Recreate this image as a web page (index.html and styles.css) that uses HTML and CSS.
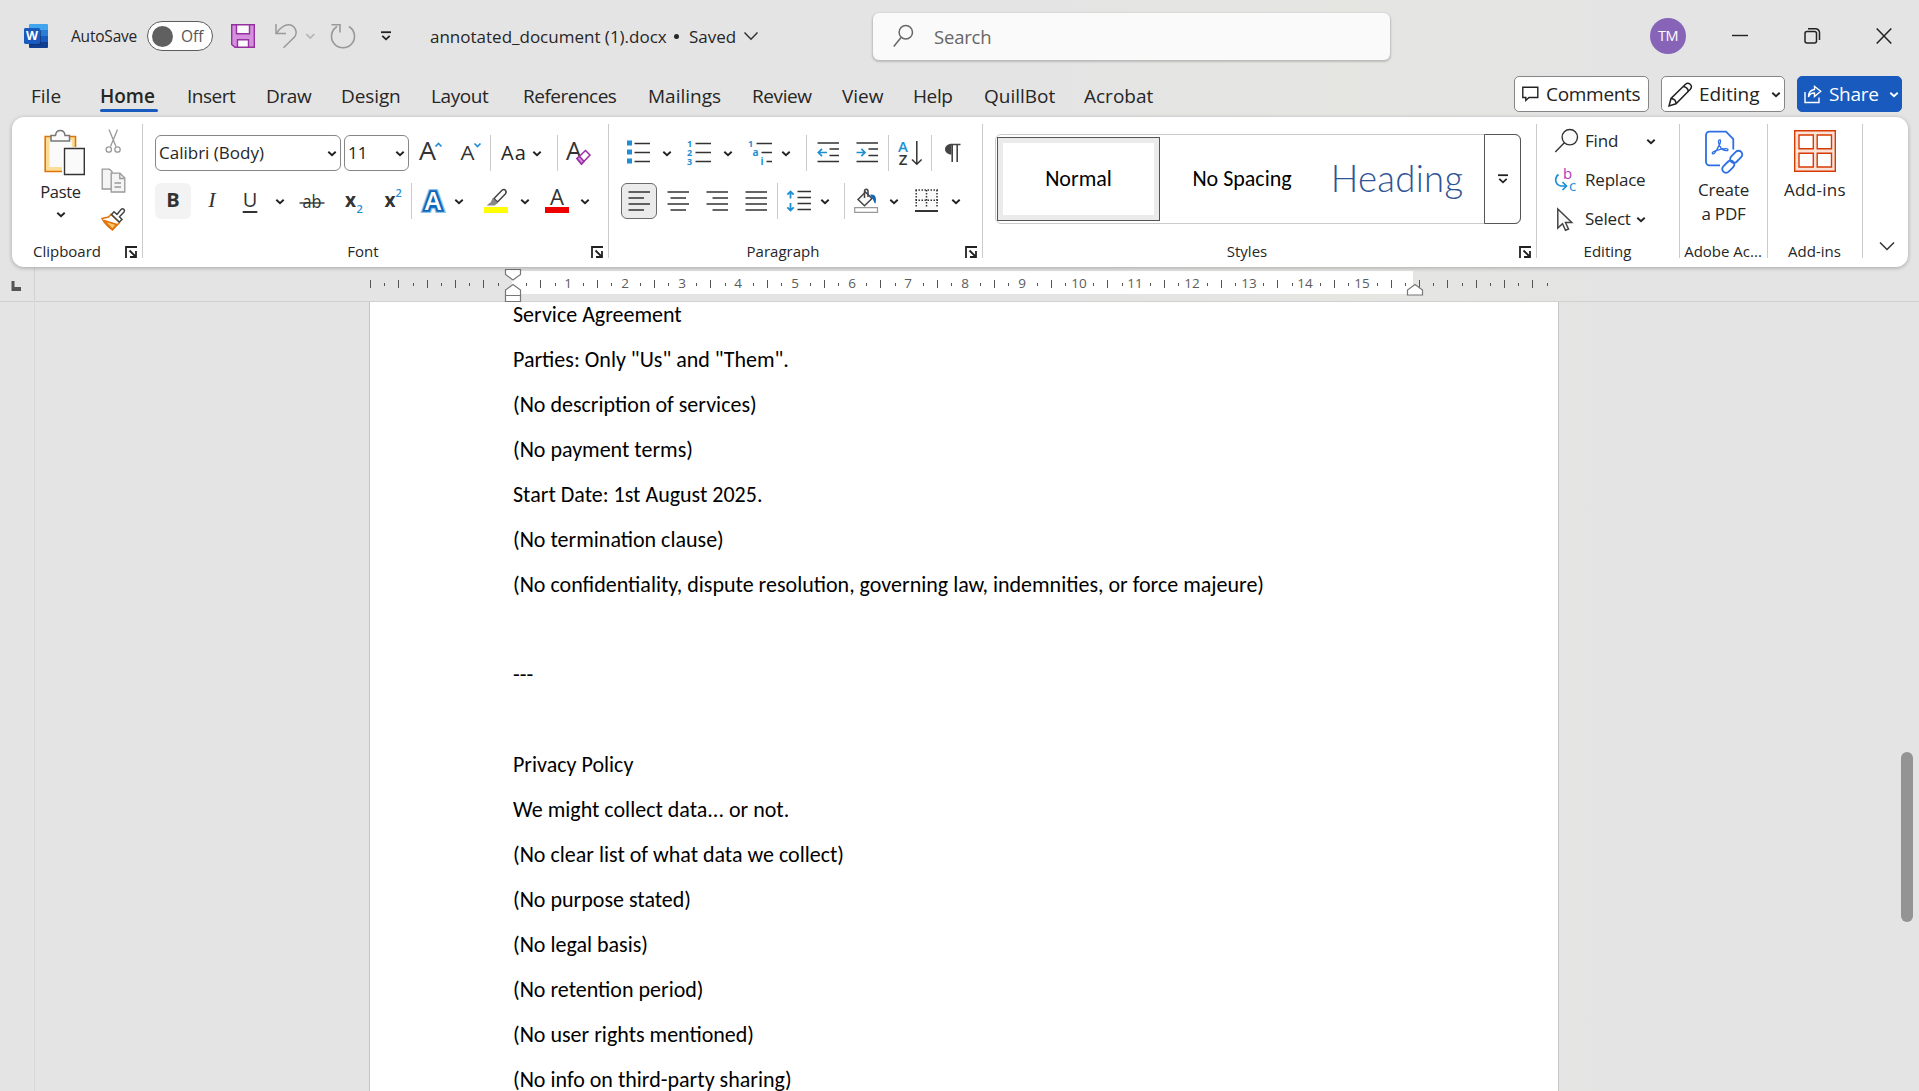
FILE: index.html
```html
<!DOCTYPE html>
<html lang="en">
<head>
<meta charset="utf-8">
<title>annotated_document (1).docx - Word</title>
<link rel="stylesheet" href="styles.css">
</head>
<body>
<svg class="defs" width="0" height="0">
  <symbol id="chev" viewBox="0 0 10 36"><path d="M1.3 16.8 5 20.3 8.7 16.8" fill="none" stroke="#222" stroke-width="1.9"/></symbol>
  <symbol id="launch" viewBox="0 0 12 12"><path d="M1 12V1H12" fill="none" stroke="#222" stroke-width="1.8"/><path d="M4.5 4.5 10.5 10.5M11 5V11H5" fill="none" stroke="#222" stroke-width="1.8"/></symbol>
  <symbol id="drop" viewBox="0 0 12 10"><path d="M1 1.2H11" stroke="#222" stroke-width="1.8"/><path d="M2.3 4.8 6 8.3 9.7 4.8" fill="none" stroke="#222" stroke-width="1.8"/></symbol>
</svg>

<header class="titlebar">
  <svg class="word-logo" width="24" height="24" viewBox="0 0 24 24">
    <path d="M6 0H23a1 1 0 0 1 1 1V6H5V1a1 1 0 0 1 1-1z" fill="#41a5ee"/><path d="M5 6H24V12H5z" fill="#2b7cd3"/><path d="M5 12H24V18H5z" fill="#185abd"/><path d="M5 18H24V23a1 1 0 0 1-1 1H6a1 1 0 0 1-1-1z" fill="#103f91"/>
    <path d="M5 6H16a1 1 0 0 1 1 1V20a1 1 0 0 1-1 1H5z" fill="#0b2c66" opacity=".55"/>
    <rect y="4" width="16" height="16" rx="1.4" fill="#185abd"/>
    <text x="8" y="16.4" text-anchor="middle" font-size="12" font-weight="700" fill="#fff" textLength="12" lengthAdjust="spacingAndGlyphs">W</text>
  </svg>
  <span class="autosave">AutoSave</span>
  <span class="toggle"><i class="knob"></i><span>Off</span></span>
  <svg width="24" height="24" viewBox="0 0 24 24"><path d="M.7.7H23.3V23.3H4L.7 20.5z" fill="#d490dc" stroke="#9430a0" stroke-width="1.4"/><path d="M5.5.7H18.5V9.8H5.5z" fill="#fafafa" stroke="#9430a0" stroke-width="1.4"/><path d="M6.5 15.7H17.5V23.3H6.5z" fill="#fafafa" stroke="#9430a0" stroke-width="1.4"/></svg>
  <svg width="24" height="26" viewBox="274 23 24 26" fill="none" stroke="#999" stroke-width="1.5"><path d="M276 24V33.5H286"/><path d="M276.3 33.2C281 27 284 24.8 288.5 24.8A7.6 7.6 0 0 1 294.5 37L283.5 47.7"/></svg>
  <svg width="10" height="10" viewBox="305 30 10 10" fill="none" stroke="#b4b4b4" stroke-width="1.6"><path d="M306.300 33 310.300 37 314.300 33"/></svg>
  <svg width="26" height="26" viewBox="329.500 23 26 26" fill="none" stroke="#999" stroke-width="1.6"><path d="M331 24.800H339.500V32.500"/><path d="M336.500 26.500A11.500 11.500 0 1 0 348.500 26.500"/></svg>
  <svg width="12" height="10"><use href="#drop"/></svg>
  <span class="doc-name">annotated_document (1).docx</span>
  <span class="dot"></span>
  <span class="saved">Saved</span>
  <svg width="16" height="10" viewBox="0 0 16 10" fill="none" stroke="#333" stroke-width="1.5"><path d="M1.500 1.500 8 8.200 14.500 1.500"/></svg>
  <div class="search">
    <svg width="20" height="24" viewBox="0 0 20 24" fill="none" stroke="#666" stroke-width="1.500"><circle cx="12.800" cy="8.200" r="6.700"/><path d="M8 13.500 .8 22.500"/></svg>
    <span>Search</span>
  </div>
  <span class="avatar">TM</span>
  <svg width="16" height="18" viewBox="0 0 16 18"><path d="M0 8.500H16" stroke="#222" stroke-width="1.400"/></svg>
  <svg width="17" height="18" viewBox="0 0 17 18" fill="none" stroke="#222" stroke-width="1.500"><rect x="1" y="4.500" width="11.500" height="11.500" rx="2"/><path d="M4 1.700H11.500A4 4 0 0 1 15.500 5.700V13"/></svg>
  <svg width="16" height="18" viewBox="0 0 16 18" stroke="#222" stroke-width="1.500"><path d="M.7 1.500 15.300 16.500M15.300 1.500 .7 16.500"/></svg>
</header>

<nav class="tabs">
  <a>File</a><a class="active">Home</a><a>Insert</a><a>Draw</a><a>Design</a><a>Layout</a><a>References</a><a>Mailings</a><a>Review</a><a>View</a><a>Help</a><a>QuillBot</a><a>Acrobat</a>
  <div class="actions">
    <button class="btn comments"><svg width="17" height="16" viewBox="0 0 17 16" fill="none" stroke="#222" stroke-width="1.400"><path d="M.8 1.200H15.800V11.500H7L3.800 14.500V11.500H.8z"/></svg><span>Comments</span></button>
    <button class="btn editing"><svg width="25" height="25" viewBox="0 0 25 25" fill="none" stroke="#222" stroke-width="1.500"><path d="M1 24 3 16.500 17.500 2.200C20.500-.5 25.500 3.500 22.300 7.300L8 21.800z"/><path d="M3 16.500C6 16.800 8 19 8 21.800M15.200 4.500C18.300 5 20.200 7 20.200 9.500"/></svg><span>Editing</span><svg width="10" height="36"><use href="#chev"/></svg></button>
    <button class="btn share"><svg width="18" height="19" viewBox="0 0 18 19" fill="none" stroke="#fff" stroke-width="1.400"><path d="M1 7V17.500H15V12.500"/><path d="M4.500 12C5.500 8.500 7.500 8 10.500 8V11.500L16.700 6.200 10.500 1.500V4.500C6.500 5 4.500 7.500 4.500 12z"/></svg><span>Share</span><svg width="10" height="36" viewBox="0 0 10 36"><path d="M1.300 16.800 5 20.300 8.700 16.800" fill="none" stroke="#fff" stroke-width="1.900"/></svg></button>
  </div>
</nav>

<section class="ribbon">
  <div class="group clipboard">
    <div class="tools">
      <div class="paste">
        <svg width="42" height="46" viewBox="44 130 42 46"><path d="M45.200 136.500H75.500V171.500H45.200z" fill="#fbdd95" stroke="#e07309" stroke-width="1.600"/><path d="M49.500 140H72V167H49.500z" fill="#fafafa"/><path d="M62 147H78V173H62z" fill="#fff"/><path d="M51 141V135.500H55.500C56 128.800 64.500 128.800 65 135.500H69.500V141z" fill="#fafafa" stroke="#777" stroke-width="1.500"/><path d="M64.500 148.500H84.300V174.500H64.500z" fill="#fafafa" stroke="#333" stroke-width="1.400"/></svg>
        <span>Paste</span>
        <svg width="10" height="36"><use href="#chev"/></svg>
      </div>
      <div class="clip-side">
        <svg width="24" height="26" viewBox="101 128 24 26" fill="none" stroke="#999" stroke-width="1.300"><path d="M109 129.500 116 146.500M117.500 129.500 110.500 146.500"/><circle cx="108.800" cy="149.500" r="2.700"/><circle cx="117.500" cy="149.500" r="2.700"/></svg>
        <svg width="25" height="25" viewBox="100.500 167.500 25 25" fill="#f4f4f4" stroke="#999" stroke-width="1.300"><path d="M101.700 168.700H109L111.500 171V188.500H101.700z"/><path d="M110.700 172.700H119.500L124.300 177.500V191.500H110.700z"/><path d="M119.300 173V178H124M114 182.500H120.500M114 186.500H120.500" fill="none"/></svg>
        <svg width="25" height="24" viewBox="101 206 25 24" fill="none" stroke-width="1.500"><path d="M102 217.500 108.500 216 111 213.500 119.500 221.500 112.500 228.800C108 226 104.500 222.500 102 217.500z" fill="#fff" stroke="#e07309"/><path d="M104 219.500 116.500 223.500 112.500 228.500z" fill="#fbc56a" stroke="#e07309"/><path d="M111.500 213.500 114 210.800 117 213.500 121 208.500C123 206.800 125.500 209 124 211L119.500 215.800 122 218.500 119.300 221z" fill="#fff" stroke="#444"/></svg>
      </div>
    </div>
    <div class="label"><span>Clipboard</span><svg width="12" height="12"><use href="#launch"/></svg></div>
  </div>

  <div class="group font">
    <div class="row font-1">
      <div class="combo"><span>Calibri (Body)</span><svg width="10" height="36"><use href="#chev"/></svg></div>
      <div class="combo size"><span>11</span><svg width="10" height="36"><use href="#chev"/></svg></div>
      <svg width="26" height="36" viewBox="419 135 26 36"><text x="427.500" y="160" text-anchor="middle" font-size="26" fill="#333" textLength="17" lengthAdjust="spacingAndGlyphs">A</text><path d="M435.500 146.500 438.500 143.500 441.500 146.500" fill="none" stroke="#1e8fd5" stroke-width="1.700"/></svg>
      <svg width="26" height="36" viewBox="460 135 26 36"><text x="467.500" y="160" text-anchor="middle" font-size="20.500" fill="#333" textLength="14" lengthAdjust="spacingAndGlyphs">A</text><path d="M474.500 143.500 477.500 146.500 480.500 143.500" fill="none" stroke="#1e8fd5" stroke-width="1.700"/></svg>
      <i class="sep"></i>
      <span class="aa">Aa</span>
      <svg width="10" height="36"><use href="#chev"/></svg>
      <i class="sep"></i>
      <svg width="26" height="36" viewBox="566 135 26 36"><text x="574" y="160" text-anchor="middle" font-size="26" fill="#333" textLength="16" lengthAdjust="spacingAndGlyphs">A</text><path d="M577 158.500 585.500 150.500 590 155 581.500 164z" fill="#fff" stroke="#9a30a8" stroke-width="1.500"/><path d="M577 158.500 579.500 156.200 584 161.300 581.500 164z" fill="#d490dc" stroke="#9a30a8" stroke-width="1.500"/></svg>
    </div>
    <div class="row font-2">
      <span class="fmt bold">B</span><span class="fmt italic">I</span><span class="fmt under">U</span>
      <svg width="10" height="36"><use href="#chev"/></svg>
      <svg width="26" height="36" viewBox="299 183 26 36"><text x="312" y="208" text-anchor="middle" font-size="19" fill="#333" textLength="19" lengthAdjust="spacingAndGlyphs">ab</text><path d="M299.500 203H324.500" stroke="#333" stroke-width="1.400"/></svg>
      <svg width="20" height="36" viewBox="345 183 20 36"><text x="345" y="207" font-size="20" font-weight="700" fill="#333" textLength="11" lengthAdjust="spacingAndGlyphs">x</text><text x="356.500" y="213" font-size="11" font-weight="600" fill="#1e8fd5">2</text></svg>
      <svg width="20" height="36" viewBox="384 183 20 36"><text x="384.500" y="207" font-size="20" font-weight="700" fill="#333" textLength="11" lengthAdjust="spacingAndGlyphs">x</text><text x="395.500" y="197" font-size="11" font-weight="600" fill="#1e8fd5">2</text></svg>
      <i class="sep"></i>
      <svg width="26" height="36" viewBox="420 183 26 36"><text x="433" y="210" text-anchor="middle" font-size="25" font-weight="700" fill="#fff" stroke="#8cc4f0" stroke-width="6">A</text><text x="433" y="210" text-anchor="middle" font-size="25" font-weight="700" fill="#fff" stroke="#0f66b8" stroke-width="3.500">A</text><text x="433" y="210" text-anchor="middle" font-size="25" font-weight="600" fill="#fff">A</text></svg>
      <svg width="10" height="36"><use href="#chev"/></svg>
      <svg width="25" height="36" viewBox="484 183 25 36"><path d="M484 207H508V213H484z" fill="#ff0"/><path d="M494 198.500 502 190.300C504.500 188 507.500 191.500 505.300 194L497.500 202z" fill="#fff" stroke="#444" stroke-width="1.500"/><path d="M492.500 198 498 203 494.500 205.500H486.500L491 202z" fill="#888"/></svg>
      <svg width="10" height="36"><use href="#chev"/></svg>
      <svg width="25" height="36" viewBox="545 183 25 36"><path d="M545 207H569V213H545z" fill="#ee0000"/><text x="557" y="205" text-anchor="middle" font-size="22" fill="#333" textLength="14" lengthAdjust="spacingAndGlyphs">A</text></svg>
      <svg width="10" height="36"><use href="#chev"/></svg>
    </div>
    <div class="label"><span>Font</span><svg width="12" height="12"><use href="#launch"/></svg></div>
  </div>

  <div class="group para">
    <div class="row para-1">
      <svg width="24" height="36" viewBox="627 135 24 36"><path d="M627 140.500h5v5h-5zM627 149.500h5v5h-5zM627 158.500h5v5h-5z" fill="#1e8fd5"/><path d="M634.500 143.500H650M634.500 152.500H650M634.500 161.500H650" stroke="#333" stroke-width="1.500"/></svg>
      <svg width="10" height="36"><use href="#chev"/></svg>
      <svg width="24" height="36" viewBox="687 135 24 36" font-size="9" font-weight="700" fill="#1e8fd5"><text x="687" y="147">1</text><text x="687" y="156.300">2</text><text x="687" y="165.300">3</text><path d="M695.500 143.500H711M695.500 152.500H711M695.500 161.500H711" stroke="#333" stroke-width="1.500"/></svg>
      <svg width="10" height="36"><use href="#chev"/></svg>
      <svg width="24" height="36" viewBox="748 135 24 36" font-size="9" font-weight="700" fill="#1e8fd5"><text x="748" y="147">1</text><text x="752.500" y="156.300" font-size="10">a</text><text x="760.500" y="165.300" font-size="10">i</text><path d="M756.500 143.500H772M761.500 152.500H772M766.500 161.500H772" stroke="#333" stroke-width="1.500"/></svg>
      <svg width="10" height="36"><use href="#chev"/></svg>
      <i class="sep"></i>
      <svg width="23" height="36" viewBox="817 135 23 36" fill="none" stroke="#333" stroke-width="1.500"><path d="M817.500 143H839M829.500 149H839M829.500 155.500H839M817.500 161.500H839"/><path d="M827 152.500H818.500M822 148.800 818.300 152.500 822 156.200" stroke="#1e8fd5" stroke-width="1.700"/></svg>
      <svg width="23" height="36" viewBox="856 135 23 36" fill="none" stroke="#333" stroke-width="1.500"><path d="M856.500 143H878M868.500 149H878M868.500 155.500H878M856.500 161.500H878"/><path d="M856.500 152.500H865M861.300 148.800 865 152.500 861.300 156.200" stroke="#1e8fd5" stroke-width="1.700"/></svg>
      <i class="sep"></i>
      <svg width="26" height="36" viewBox="897 135 26 36"><text x="903" y="151.500" text-anchor="middle" font-size="15" font-weight="600" fill="#1e8fd5">A</text><text x="903" y="165" text-anchor="middle" font-size="15" font-weight="600" fill="#333">Z</text><path d="M916.800 141V164M912 159.500 916.800 164.300 921.600 159.500" fill="none" stroke="#333" stroke-width="1.500"/></svg>
      <i class="sep"></i>
      <svg width="16" height="36" viewBox="945 135 16 36"><path d="M960.500 144.500H951.500V154.500C943 154.500 943 144 951 144" fill="#444"/><path d="M952.200 144V162M957.200 144V162M950 144.500H960.500" stroke="#444" stroke-width="1.600"/></svg>
    </div>
    <div class="row para-2">
      <span class="align on"><svg width="22" height="20" viewBox="0 0 22 20"><path d="M.5 1H22M.5 7H16M.5 13H22M.5 19H16" stroke="#333" stroke-width="1.500"/></svg></span>
      <svg width="22" height="20" viewBox="0 0 22 20"><path d="M.5 1H22M3.500 7H19M.5 13H22M3.500 19H19" stroke="#333" stroke-width="1.500"/></svg>
      <svg width="22" height="20" viewBox="0 0 22 20"><path d="M.5 1H22M6.500 7H22M.5 13H22M6.500 19H22" stroke="#333" stroke-width="1.500"/></svg>
      <svg width="22" height="20" viewBox="0 0 22 20"><path d="M.5 1H22M.5 7H22M.5 13H22M.5 19H22" stroke="#333" stroke-width="1.500"/></svg>
      <i class="sep"></i>
      <svg width="25" height="36" viewBox="787 183 25 36" fill="none" stroke="#333" stroke-width="1.500"><path d="M797.500 191.500H811M797.500 197.500H811M797.500 203.500H811M797.500 209.500H811"/><path d="M790.500 198.500V191.500M787.300 194.700 790.500 191.500 793.700 194.700M790.500 203V210.500M787.300 207.300 790.500 210.500 793.700 207.300" stroke="#1e8fd5" stroke-width="1.800"/></svg>
      <svg width="10" height="36"><use href="#chev"/></svg>
      <i class="sep"></i>
      <svg width="25" height="36" viewBox="854 183 25 36"><path d="M854.700 207.700H877.500V212.300H854.700z" fill="#fff" stroke="#999" stroke-width="1.200"/><path d="M858 199.500 865.500 192 872 198.500 864.500 205.800z" fill="#fafafa" stroke="#444" stroke-width="1.500"/><path d="M864.500 198V191.500C864.500 188.500 868 188.500 868 191.500V197" fill="none" stroke="#444" stroke-width="1.500"/><path d="M870.500 194.500C875 194 877 197 875.500 203.500 874 204 873.500 198 870.500 196z" fill="#0f66b8"/></svg>
      <svg width="10" height="36"><use href="#chev"/></svg>
      <svg width="24" height="36" viewBox="915 183 24 36"><path d="M916 190H937V209H916z" fill="#fafafa"/><path d="M915.500 190H938.500M915.500 200.200H938.500" stroke="#333" stroke-width="1.500" stroke-dasharray="1.500 1.500"/><path d="M916.200 190V208M926.500 190V208M937 190V208" stroke="#333" stroke-width="1.500" stroke-dasharray="1.500 1.500"/><path d="M915 211H938" stroke="#000" stroke-width="1.600"/></svg>
      <svg width="10" height="36"><use href="#chev"/></svg>
    </div>
    <div class="label"><span>Paragraph</span><svg width="12" height="12"><use href="#launch"/></svg></div>
  </div>

  <div class="group styles">
    <div class="gallery">
      <div class="style selected">Normal</div>
      <div class="style">No Spacing</div>
      <div class="style heading">Heading</div>
      <div class="more"><svg width="12" height="10"><use href="#drop"/></svg></div>
    </div>
    <div class="label"><span>Styles</span><svg width="12" height="12"><use href="#launch"/></svg></div>
  </div>

  <div class="group edit">
    <div class="commands">
      <div class="cmd find"><svg width="24" height="26" viewBox="1556 128 24 26" fill="#fafafa" stroke="#333" stroke-width="1.400"><circle cx="1570.800" cy="137.200" r="7.700"/><path d="M1565.300 142.800 1556.300 152"/></svg><span>Find</span><svg width="10" height="36"><use href="#chev"/></svg></div>
      <div class="cmd"><svg width="24" height="26" viewBox="1555 168 24 26"><text x="1563" y="180" font-size="15" fill="#b23ab8">b</text><text x="1569" y="191.800" font-size="15" fill="#1e8fd5">c</text><path d="M1558.500 175.500C1554 179 1555 186 1561 187H1566M1562.500 183 1566.500 187 1562.500 191" fill="none" stroke="#1e8fd5" stroke-width="1.700"/></svg><span>Replace</span></div>
      <div class="cmd select"><svg width="24" height="26" viewBox="1556 206 24 26"><path d="M1558.800 209V228L1563.500 223.800 1566.500 230.300 1569.500 229 1566.500 222.500H1572.800z" fill="#fafafa" stroke="#444" stroke-width="1.500"/></svg><span>Select</span><svg width="10" height="36"><use href="#chev"/></svg></div>
    </div>
    <div class="label"><span>Editing</span></div>
  </div>

  <div class="group adobe">
    <div class="big"><svg width="42" height="46" viewBox="1708 131 42 46" fill="none" stroke="#2d6fe4" stroke-width="1.800"><path d="M1725 167.300H1714.500A3.500 3.500 0 0 1 1711 163.800V137.200A3.500 3.500 0 0 1 1714.500 133.700H1731L1738.300 141V151.500"/><path d="M1725.300 142C1722.500 141.500 1723 146 1726 150 1728.500 153 1733.500 153.500 1733 151.500 1732 149.500 1721.500 151.500 1718 154 1716 156 1718.500 157 1720.500 154 1723 150 1726.500 143 1725.300 142z" stroke-width="1.300"/><rect x="-6" y="-3.800" width="14" height="7.600" rx="3.800" transform="translate(1740.500 159.500) rotate(-45)"/><rect x="-8" y="-3.800" width="14" height="7.600" rx="3.800" transform="translate(1734 168) rotate(-45)"/></svg><span>Create<br>a PDF</span></div>
    <div class="label"><span>Adobe Ac...</span></div>
  </div>

  <div class="group addins">
    <div class="big"><svg width="42" height="46" viewBox="1794 129 42 46" fill="#fff" stroke="#d83b01" stroke-width="1.400"><path d="M1794.700 130.700H1835.300V171.300H1794.700z" fill="#fbe3da"/><path d="M1799 135H1813.300V148.800H1799zM1817.200 135H1831.500V148.800H1817.200zM1799 153.200H1813.300V167H1799zM1817.200 153.200H1831.500V167H1817.200z"/></svg><span>Add-ins</span></div>
    <div class="label"><span>Add-ins</span></div>
  </div>
  <svg class="collapse" width="16" height="10" viewBox="0 0 16 10" fill="none" stroke="#333" stroke-width="1.500"><path d="M1 1.500 8 8.500 15 1.500"/></svg>
</section>

<div class="ruler">
  <svg width="1919" height="35" viewBox="0 267 1919 35">
    <path d="M512 271H1413V294H512z" fill="#fff"/>
    <path d="M34.500 267V300" stroke="#d2d2d2"/>
    <path d="M11.500 281H14.500V287H21V291H11.500z" fill="#555"/>
    <g stroke="#555" shape-rendering="crispEdges">
      <path d="M370 284H486M1419 284H1535" stroke-width="8" stroke-dasharray="1 27.350"/>
      <path d="M384.200 284H500M1433.200 284H1548" stroke-width="3" stroke-dasharray="1 27.350"/>
      <path d="M540.200 284H1400" stroke-width="8" stroke-dasharray="1 55.700"/>
      <path d="M526.200 284H1410" stroke-width="3" stroke-dasharray="1 27.350"/>
    </g>
    <g class="nums"><text x="568" y="288">1</text><text x="625" y="288">2</text><text x="682" y="288">3</text><text x="738" y="288">4</text><text x="795" y="288">5</text><text x="852" y="288">6</text><text x="908" y="288">7</text><text x="965" y="288">8</text><text x="1022" y="288">9</text><text x="1079" y="288">10</text><text x="1135" y="288">11</text><text x="1192" y="288">12</text><text x="1249" y="288">13</text><text x="1305" y="288">14</text><text x="1362" y="288">15</text></g>
    <g fill="#fff" stroke="#777" stroke-width="1.200"><path d="M505.500 269.500H520.500V274.500L513 280 505.500 274.500z"/><path d="M505.500 301.500V290L513 284.500 520.500 290V301.500zM505.500 295.500H520.500"/><path d="M1407.500 295V290L1415 284.500 1422.500 290V295z"/></g>
  </svg>
</div>

<main class="workspace">
  <div class="vruler"></div>
  <article class="page">
    <p>Service Agreement</p>
    <p>Parties: Only "Us" and "Them".</p>
    <p>(No description of services)</p>
    <p>(No payment terms)</p>
    <p>Start Date: 1st August 2025.</p>
    <p>(No termination clause)</p>
    <p>(No confidentiality, dispute resolution, governing law, indemnities, or force majeure)</p>
    <p></p>
    <p>---</p>
    <p></p>
    <p>Privacy Policy</p>
    <p>We might collect data... or not.</p>
    <p>(No clear list of what data we collect)</p>
    <p>(No purpose stated)</p>
    <p>(No legal basis)</p>
    <p>(No retention period)</p>
    <p>(No user rights mentioned)</p>
    <p>(No info on third-party sharing)</p>
  </article>
  <div class="scroll"><div class="thumb"></div></div>
</main>
</body>
</html>
```
FILE: styles.css
```css
* { box-sizing: border-box; }
body {
  margin: 0;
  width: 1919px;
  height: 1091px;
  overflow: hidden;
  display: flex;
  flex-direction: column;
  background: linear-gradient(90deg, #e4e4e4 0, #e4e4e4 55%, #e5e5e2 70%, #e4e4e4 84%);
  font: 17px "Open Sans", "Noto Sans", sans-serif;
  color: #262626;
  white-space: nowrap;
}
.defs { position: absolute; }
svg { display: block; flex: none; overflow: visible; }

/* Title bar: one column per item, measured from each item's left edge */
.titlebar {
  height: 72px;
  display: grid;
  align-items: center;
  justify-items: start;
  padding-left: 24px;
  grid-template-columns: 47px 76px 84px 43px 31px 25px 50px 50px 244px 15px 54px 130px 777px 82px 72px 72px 20px;
}
.autosave { font-size: 15.500px; letter-spacing: -.2px; }
.toggle {
  width: 66px;
  height: 30px;
  border: 1px solid #5c5c5c;
  border-radius: 15px;
  background: #fff;
  display: flex;
  align-items: center;
  padding-left: 4px;
  gap: 8px;
  font-size: 15.500px;
  color: #555;
}
.knob { width: 21px; height: 21px; border-radius: 50%; background: #606060; }
.dot { width: 5px; height: 5px; border-radius: 50%; background: #262626; }
.search {
  width: 517px;
  height: 47px;
  border-radius: 6px;
  background: #fafafa;
  box-shadow: 0 1px 2px 1px rgba(0, 0, 0, .18);
  display: flex;
  align-items: center;
  padding-left: 20px;
  gap: 21px;
  color: #666;
  font-size: 18.500px;
  letter-spacing: -.2px;
}
.avatar {
  width: 36px;
  height: 36px;
  border-radius: 50%;
  background: #8764b8;
  color: #fff;
  font-size: 14.500px;
  line-height: 36px;
  text-align: center;
  letter-spacing: -.6px;
}

/* Tabs */
.tabs {
  height: 45px;
  display: grid;
  align-items: start;
  justify-items: start;
  padding-left: 31px;
  grid-template-columns: 69px 87px 79px 75px 90px 92px 125px 104px 90px 71px 71px 100px 430px auto;
  font-size: 19px;
  letter-spacing: -.4px;
}
.tabs a { height: 41px; line-height: 48px; }
.tabs a:nth-child(1) { letter-spacing: 0; }
.tabs a:nth-child(3) { letter-spacing: -.500px; }
.tabs a:nth-child(5) { letter-spacing: -.100px; }
.tabs a:nth-child(7) { letter-spacing: -.500px; }
.tabs a:nth-child(8) { letter-spacing: 0; }
.tabs a:nth-child(10) { letter-spacing: 0; }
.tabs a:nth-child(12), .tabs a:nth-child(13) { letter-spacing: 0; }
.tabs .active { font-weight: 600; position: relative; letter-spacing: 0; }
.tabs .active::after {
  content: "";
  position: absolute;
  left: 0;
  bottom: 1px;
  width: 58px;
  height: 3px;
  border-radius: 2px;
  background: #185abd;
}
.actions { display: flex; gap: 12px; padding-top: 4px; }
.btn {
  height: 36px;
  border: 1px solid #868686;
  border-radius: 5px;
  background: #fff;
  display: flex;
  align-items: center;
  padding: 0 0 0 7px;
  gap: 7px;
  font: inherit;
  letter-spacing: -.3px;
  color: #222;
}
.comments { width: 135px; }
.editing { width: 124px; padding-left: 6px; gap: 6px; letter-spacing: 0; }
.editing svg:last-child { margin-left: 5px; }
.share { width: 105px; background: #185abd; border-color: #185abd; color: #fff; padding-left: 6px; }
.share svg:last-child { margin-left: 3px; }

/* Ribbon */
.ribbon {
  width: 1896px;
  height: 150px;
  margin-left: 12px;
  border-radius: 12px;
  background: #fff;
  box-shadow: 0 1px 4px rgba(0, 0, 0, .28);
  display: flex;
  padding: 7px 0 9px;
  position: relative;
}
.group { border-right: 1px solid #cbcbcb; display: flex; flex-direction: column; justify-content: space-between; }
.label { display: flex; align-items: flex-end; height: 14px; line-height: 14px; font-size: 15px; padding-right: 5px; }
.label span { flex: 1; text-align: center; padding-right: 8px; }
.edit .label, .adobe .label, .addins .label { padding: 0 1px 0 0; }
.edit .label span, .adobe .label span, .addins .label span { padding: 0; }
.clipboard { width: 131px; }
.clipboard .label span { padding-right: 3px; }
.font { width: 466px; }
.para { width: 374px; }
.styles { width: 554px; }
.edit { width: 143px; }
.adobe { width: 88px; }
.addins { width: 95px; }
.sep { width: 1px; height: 36px; background: #cbcbcb; }

.tools { display: flex; padding: 6px 0 0 28px; }
.paste { width: 43px; display: flex; flex-direction: column; align-items: center; }
.paste span { line-height: 24px; margin-top: 4px; font-size: 16.500px; letter-spacing: -.3px; margin-left: -2px; }
.paste svg { margin-left: 6px; }
.paste svg:last-child { margin: -8px 0 0 -2px; }
.clip-side { padding: 0 0 0 18px; margin-top: -2px; display: grid; row-gap: 13px; }

.row { display: grid; height: 36px; align-items: center; justify-items: start; }
.font-1, .para-1 { margin-top: 11px; }
.font-2, .para-2 { margin: -13px 0 0; }
.font-1 { grid-template-columns: 189px 75px 41px 30px 11px 31px 25px 9px 26px; }
.font-2 { grid-template-columns: 39px 38px 43px 24px 46px 39px 27px 9px 34px 30px 36px 25px 35px 10px; }
.font .row { margin-left: 12px; }
.combo {
  width: 186px;
  height: 36px;
  border: 1px solid #868686;
  border-radius: 6px;
  background: #fff;
  display: flex;
  align-items: center;
  justify-content: space-between;
  padding: 0 3px;
  font-size: 17px;
}
.combo span { padding-bottom: 1px; }
.combo.size { width: 65px; }
.aa { font-size: 20px; letter-spacing: 1px; line-height: 36px; }
.fmt { width: 36px; height: 36px; border-radius: 6px; line-height: 34px; text-align: center; font-size: 20px; color: #333; }
.bold { background: #f3f3f3; font-weight: 700; }
.italic { font-family: "Liberation Serif", serif; font-style: italic; font-size: 22px; }
.under { text-decoration: underline; text-decoration-thickness: 1.500px; text-underline-offset: 4px; }

.para .row { margin-left: 18px; }
.para .para-2 { margin-left: 12px; }
.para-1 { grid-template-columns: 35px 25px 36px 25px 33px 25px 11px 39px 32px 9px 34px 14px 16px; }
.para-2 { grid-template-columns: 46px 39px 39px 32px 10px 33px 24px 10px 35px 26px 36px 10px; }
.align.on {
  width: 36px;
  height: 36px;
  display: grid;
  place-items: center;
  border: 1px solid #6a6a6a;
  border-radius: 6px;
  background: #ebebeb;
}

.gallery {
  width: 526px;
  height: 90px;
  margin: 10px 0 0 12px;
  border: 1px solid #cbcbcb;
  border-radius: 6px;
  display: grid;
  grid-template-columns: 165px 162px 1fr 36px;
  align-items: center;
  font: 22px Carlito, Calibri, Lato, sans-serif;
  color: #000;
}
.style { text-align: center; line-height: 66px; }
.selected {
  width: 163px;
  height: 84px;
  margin-left: 1px;
  border: 1px solid #555;
  outline: 5px solid #ebebeb;
  outline-offset: -6px;
  line-height: 82px;
}
.heading { font: 300 36.500px/84px Lato, sans-serif; color: #2f5496; letter-spacing: .3px; padding: 0 13px 2px 0; }
.more {
  height: 90px;
  margin: -1px -1px -1px 0;
  border: 1px solid #555;
  border-radius: 0 6px 6px 0;
  display: grid;
  place-items: center;
}

.commands { display: flex; flex-direction: column; padding: 0 0 0 18px; margin-top: -3px; }
.cmd { display: grid; height: 39px; align-items: center; grid-template-columns: 30px auto 1fr; letter-spacing: -.2px; }
.find svg:last-child { margin-left: 28px; }
.select svg:last-child { margin-left: 5px; }

.big { display: flex; flex-direction: column; align-items: center; text-align: center; line-height: 24px; padding-top: 5px; letter-spacing: -.2px; }
.big svg { margin-bottom: 3px; }
.addins .big { letter-spacing: .3px; }
.collapse { margin: 117px 0 0 16px; }

/* Ruler */
.ruler { height: 35px; border-bottom: 1px solid #d0d0d0; }
.nums { font-size: 13.500px; fill: #5c5c5c; text-anchor: middle; }

/* Document */
.workspace { flex: 1; min-height: 0; display: flex; }
.vruler { width: 35px; border-right: 1px solid #d9d9d9; }
.page {
  width: 1190px;
  margin-left: 334px;
  padding-left: 143px;
  overflow: hidden;
  background: #fff;
  border: solid #c6c6c6;
  border-width: 0 1px;
  font: 22px/45px Carlito, Calibri, Lato, sans-serif;
  color: #000;
}
.page p { margin: 0; height: 45px; }
.page p:first-child { margin-top: -10px; }
.scroll { flex: 1; padding: 450px 6px 0 0; display: flex; justify-content: flex-end; }
.thumb { width: 12px; height: 170px; border-radius: 6px; background: #949494; }
```
